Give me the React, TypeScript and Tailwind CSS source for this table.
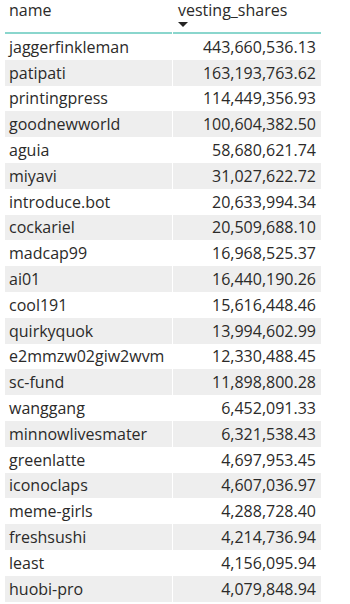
const rows: [string, string][] = [
  ["jaggerfinkleman", "443,660,536.13"],
  ["patipati", "163,193,763.62"],
  ["printingpress", "114,449,356.93"],
  ["goodnewworld", "100,604,382.50"],
  ["aguia", "58,680,621.74"],
  ["miyavi", "31,027,622.72"],
  ["introduce.bot", "20,633,994.34"],
  ["cockariel", "20,509,688.10"],
  ["madcap99", "16,968,525.37"],
  ["ai01", "16,440,190.26"],
  ["cool191", "15,616,448.46"],
  ["quirkyquok", "13,994,602.99"],
  ["e2mmzw02giw2wvm", "12,330,488.45"],
  ["sc-fund", "11,898,800.28"],
  ["wanggang", "6,452,091.33"],
  ["minnowlivesmater", "6,321,538.43"],
  ["greenlatte", "4,697,953.45"],
  ["iconoclaps", "4,607,036.97"],
  ["meme-girls", "4,288,728.40"],
  ["freshsushi", "4,214,736.94"],
  ["least", "4,156,095.94"],
  ["huobi-pro", "4,079,848.94"],
];

export default function App() {
  return (
    <div className="h-[604px] w-[350px] overflow-hidden bg-white font-['Open_Sans',sans-serif] text-[16px] text-[#2b2a29]">
      <div className="ml-[5px] w-[316px]">
        <div className="flex h-[32px]">
          <div className="w-[168px] pl-[4px] leading-[21px]">name</div>
          <div className="w-[148px] pl-[5px] leading-[21px]">
            vesting_shares
            <svg width="10" height="5" viewBox="0 0 10 5" className="mt-[1px] block">
              <path d="M0 0 L10 0 L5 5 Z" fill="#252423" />
            </svg>
          </div>
        </div>
        <div className="flex h-[2px] gap-px">
          <div className="w-[167px] bg-[#8ad6cd]" />
          <div className="flex-1 bg-[#8ad6cd]" />
        </div>
        {rows.map(([name, value], i) => (
          <div key={name} className="flex h-[25.8px] gap-px">
            <div
              className={`flex h-full w-[167px] items-center pl-[4px] ${i % 2 === 1 ? "bg-[#eeeeee]" : "bg-white"}`}
            >
              {name}
            </div>
            <div
              className={`flex h-full flex-1 items-center justify-end pr-[5px] ${i % 2 === 1 ? "bg-[#eeeeee]" : "bg-white"}`}
            >
              {value}
            </div>
          </div>
        ))}
      </div>
    </div>
  );
}
